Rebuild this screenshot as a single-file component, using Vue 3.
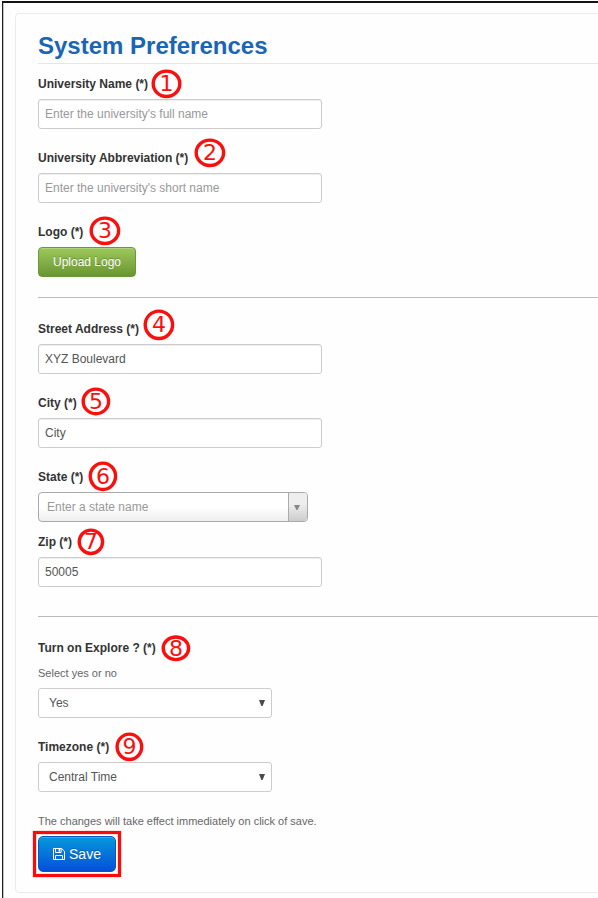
<template>
  <div class="page">
    <form class="card" @submit.prevent>
      <h1 class="title">System Preferences</h1>

      <div class="field">
        <label for="name">University Name (*)</label>
        <input id="name" v-model="form.name" type="text" placeholder="Enter the university's full name">
      </div>
      <div class="field">
        <label for="abbr">University Abbreviation (*)</label>
        <input id="abbr" v-model="form.abbreviation" type="text" placeholder="Enter the university's short name">
      </div>
      <div class="field logo">
        <label>Logo (*)</label>
        <button type="button" class="btn btn-upload">Upload Logo</button>
      </div>

      <hr>

      <div class="field">
        <label for="street">Street Address (*)</label>
        <input id="street" v-model="form.street" type="text">
      </div>
      <div class="field">
        <label for="city">City (*)</label>
        <input id="city" v-model="form.city" type="text">
      </div>
      <div class="field state">
        <label>State (*)</label>
        <div class="combo">
          <span class="combo-text">Enter a state name</span>
          <span class="combo-arrow">
            <svg width="6" height="5" viewBox="0 0 6 5"><path d="M0 0h6L3.5 5h-1z" fill="#888" /></svg>
          </span>
        </div>
      </div>
      <div class="field zip">
        <label for="zip">Zip (*)</label>
        <input id="zip" v-model="form.zip" type="text">
      </div>

      <hr>

      <div class="field">
        <label>Turn on Explore ? (*)</label>
        <p class="hint">Select yes or no</p>
        <div class="select">
          <span>{{ form.explore }}</span>
          <svg width="6" height="6" viewBox="0 0 6 6"><path d="M0 0h6L3.6 6H2.4z" fill="#4a4a4a" /></svg>
        </div>
      </div>
      <div class="field timezone">
        <label>Timezone (*)</label>
        <div class="select">
          <span>{{ form.timezone }}</span>
          <svg width="6" height="6" viewBox="0 0 6 6"><path d="M0 0h6L3.6 6H2.4z" fill="#4a4a4a" /></svg>
        </div>
      </div>

      <p class="hint">The changes will take effect immediately on click of save.</p>
      <div class="save-frame">
        <button type="submit" class="btn btn-save">
          <svg width="12" height="12" viewBox="0 0 12 12" fill="none" stroke="#fff">
            <path d="M.5 .5h8.2l2.8 2.8v8.2H.5z" />
            <path d="M2.5 11.5v-4h7v4M2.5 .5v4h5.6v-4" />
            <path d="M6.4 1v2.6" stroke-width="1.6" />
          </svg>
          <span>Save</span>
        </button>
      </div>
    </form>

    <svg class="markers" width="598" height="898" viewBox="0 0 598 898">
      <g v-for="(m, i) in markers" :key="i">
        <ellipse :cx="m.x" :cy="m.y" :rx="m.rx" :ry="m.ry" />
        <text :x="m.x" :y="m.base">{{ i + 1 }}</text>
      </g>
    </svg>
  </div>
</template>

<script setup>
import { reactive } from 'vue'

const form = reactive({
  name: '',
  abbreviation: '',
  street: 'XYZ Boulevard',
  city: 'City',
  zip: '50005',
  explore: 'Yes',
  timezone: 'Central Time'
})

// numbered callouts drawn over the form
const markers = [
  { x: 166.5, y: 83.8, rx: 13.3, ry: 12.7, base: 91 },
  { x: 209.9, y: 152.8, rx: 13.7, ry: 12.7, base: 160 },
  { x: 104.9, y: 230.8, rx: 13.7, ry: 12.7, base: 238 },
  { x: 158.9, y: 324.8, rx: 13.7, ry: 13.7, base: 332 },
  { x: 95.9, y: 401.4, rx: 12.7, ry: 12.3, base: 409 },
  { x: 102.9, y: 476.3, rx: 12.7, ry: 13.2, base: 484 },
  { x: 90.9, y: 541.8, rx: 11.7, ry: 11.7, base: 549 },
  { x: 175.9, y: 648.3, rx: 12.7, ry: 11.3, base: 656 },
  { x: 129.4, y: 746.8, rx: 12.3, ry: 12.7, base: 754 }
]
</script>

<style>
body {
  background: #fefefe;
}
</style>

<style scoped>
.page {
  position: relative;
  box-sizing: border-box;
  width: 598px;
  height: 898px;
  padding: 13px 0 0 15px;
  overflow: hidden;
  background: #fefefe;
  color: #555;
  font: 12px/20px "Liberation Sans", Arial, sans-serif;
}

/* window edge */
.page::before {
  content: "";
  position: absolute;
  top: 1px;
  left: 2px;
  width: 600px;
  height: 900px;
  box-sizing: border-box;
  border-top: 2px solid #151515;
  border-left: 1px solid #1c1c1c;
  box-shadow: inset 1px 0 #c4c4c4;
}

.card {
  position: relative;
  box-sizing: border-box;
  width: 620px;
  height: 880px;
  padding: 12px 0 0 22px;
  border: 1px solid #ebebeb;
  border-radius: 4px;
}

.title {
  box-sizing: border-box;
  height: 38px;
  margin: 0 0 10px;
  border-bottom: 1px solid #e5e5e5;
  color: #1a65b4;
  font-size: 24px;
  line-height: 40px;
}

.field {
  margin-bottom: 19px;
}

.field label {
  display: block;
  margin-bottom: 5px;
  color: #333;
  font-weight: bold;
}

.field input {
  display: block;
  box-sizing: border-box;
  width: 284px;
  height: 30px;
  margin: 0;
  padding: 4px 6px;
  border: 1px solid #ccc;
  border-radius: 3px;
  background: #fff;
  box-shadow: inset 0 1px 1px rgba(0, 0, 0, 0.075);
  color: #555;
  font: inherit;
}

.field input::placeholder {
  color: #999;
  opacity: 1;
}

.logo {
  margin-bottom: 20px;
}

.state {
  margin-bottom: 10px;
}

.zip {
  margin-bottom: 29px;
}

hr {
  height: 1px;
  margin: 0 0 21px;
  border: 0;
  background: #bbb;
}

.btn {
  display: flex;
  align-items: center;
  justify-content: center;
  box-sizing: border-box;
  margin: 0;
  padding: 0;
  color: #fff;
  font-family: inherit;
  text-shadow: 0 -1px 0 rgba(0, 0, 0, 0.25);
}

.btn-upload {
  width: 98px;
  height: 30px;
  border: 1px solid #6a9838;
  border-radius: 4px;
  background: linear-gradient(#9dc85c, #6a9632);
  box-shadow: inset 0 1px 0 rgba(255, 255, 255, 0.2);
  font-size: 12px;
}

.combo {
  display: flex;
  box-sizing: border-box;
  width: 270px;
  height: 30px;
  overflow: hidden;
  border: 1px solid #aaa;
  border-radius: 4px;
  background: linear-gradient(#fff 50%, #eee);
}

.combo-text {
  flex: 1;
  padding-left: 8px;
  color: #999;
  line-height: 28px;
}

.combo-arrow {
  display: flex;
  align-items: center;
  box-sizing: border-box;
  width: 19px;
  padding-left: 5px;
  border-left: 1px solid #aaa;
  background: linear-gradient(#eee 40%, #ccc);
}

.hint {
  margin: 0 0 5px;
  color: #666;
  font-size: 11px;
}

.select {
  display: flex;
  align-items: center;
  justify-content: space-between;
  box-sizing: border-box;
  width: 234px;
  height: 30px;
  padding: 0 6px 0 10px;
  border: 1px solid #ccc;
  border-radius: 3px;
  background: #fff;
}

.save-frame {
  box-sizing: border-box;
  width: 88px;
  height: 46px;
  margin: -5px 0 0 -5px;
  padding: 2px;
  border: 3px solid #fb0a0a;
  box-shadow: inset 0 0 0 1px rgba(251, 10, 10, 0.12), 0 0 0 1px rgba(251, 10, 10, 0.12);
}

.btn-save {
  gap: 4px;
  width: 78px;
  height: 36px;
  border: 1px solid #0559c4;
  border-radius: 5px;
  background: linear-gradient(#0598dc, #0550d8);
  box-shadow: inset 0 1px 0 rgba(255, 255, 255, 0.2);
  font-size: 14px;
}

.markers {
  position: absolute;
  top: 0;
  left: 0;
  pointer-events: none;
}

.markers ellipse {
  fill: none;
  stroke: #fb0f0c;
  stroke-width: 3.4;
}

.markers text {
  fill: #fb0f0c;
  font: 22px "DejaVu Sans", sans-serif;
  text-anchor: middle;
}
</style>
